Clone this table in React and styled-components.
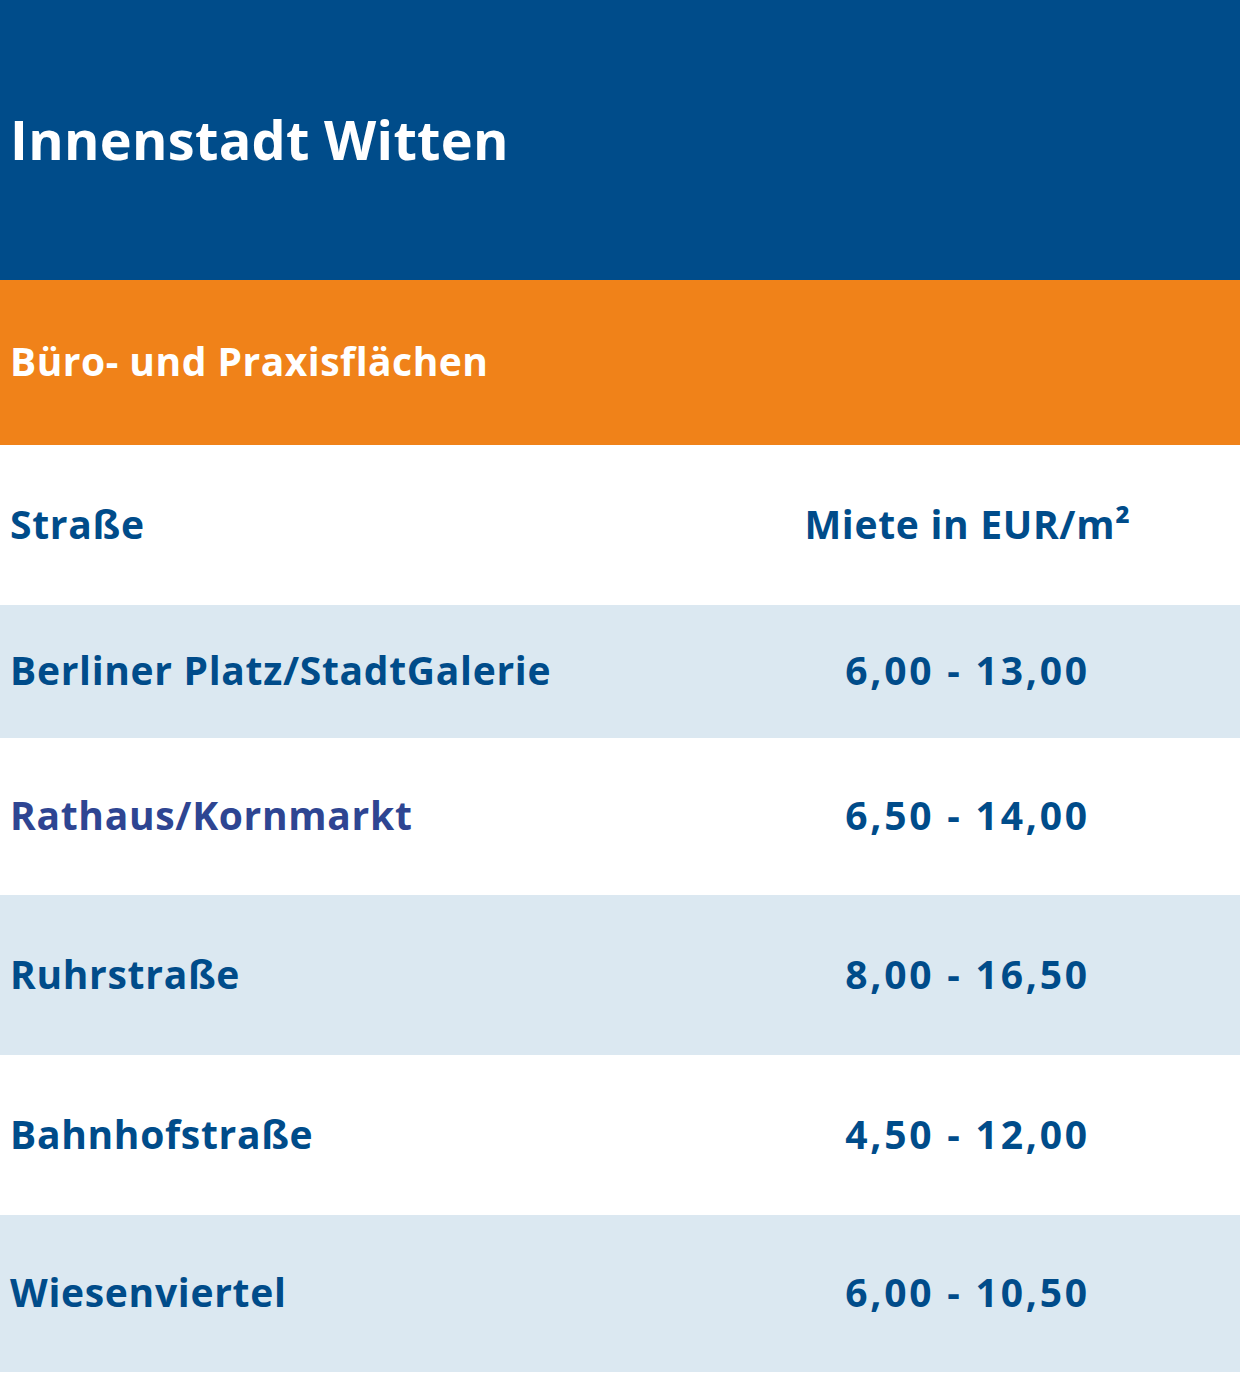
import React from 'react';
import styled, { createGlobalStyle } from 'styled-components';

const GlobalStyle = createGlobalStyle`
  html, body {
    margin: 0;
    padding: 0;
    background: #ffffff;
  }
  body {
    font-family: "Open Sans", "Liberation Sans", sans-serif;
  }
`;

const Page = styled.div`
  width: 1240px;
  padding-bottom: 3px;
`;

const TitleBar = styled.header`
  height: 280px;
  background: #004c8a;
  display: flex;
  align-items: center;
  padding: 0 10px 2px;
  box-sizing: border-box;
`;

const Title = styled.h1`
  margin: 0;
  color: #ffffff;
  font-size: 54px;
  font-weight: 700;
  letter-spacing: 0.3px;
`;

const SubBar = styled.div`
  height: 165px;
  background: #f08219;
  display: flex;
  align-items: center;
  padding: 0 10px 5px;
  box-sizing: border-box;
`;

const SubTitle = styled.h2`
  margin: 0;
  color: #ffffff;
  font-size: 39px;
  font-weight: 700;
  letter-spacing: 0.5px;
`;

const Row = styled.div`
  display: grid;
  grid-template-columns: 695px 1fr;
  align-items: center;
  box-sizing: border-box;
  padding-bottom: 4px;
  height: ${p => p.$h}px;
  background: ${p => (p.$shaded ? '#dbe8f1' : '#ffffff')};
  color: ${p => p.$color || '#004c8a'};
  font-size: 39px;
  font-weight: 700;
  letter-spacing: 0.7px;
`;

const Street = styled.div`
  padding-left: 10px;
`;

const Price = styled.div`
  text-align: center;
  color: #004c8a;
  letter-spacing: ${p => (p.$num ? '2.8px' : '0.7px')};
`;

const rows = [
  { street: 'Berliner Platz/StadtGalerie', price: '6,00 - 13,00', h: 133, shaded: true },
  { street: 'Rathaus/Kornmarkt', price: '6,50 - 14,00', h: 157, color: '#2e4592' },
  { street: 'Ruhrstraße', price: '8,00 - 16,50', h: 160, shaded: true },
  { street: 'Bahnhofstraße', price: '4,50 - 12,00', h: 160 },
  { street: 'Wiesenviertel', price: '6,00 - 10,50', h: 157, shaded: true },
];

export default function App() {
  return (
    <Page>
      <GlobalStyle />
      <TitleBar>
        <Title>Innenstadt Witten</Title>
      </TitleBar>
      <SubBar>
        <SubTitle>Büro- und Praxisflächen</SubTitle>
      </SubBar>
      <Row $h={160}>
        <Street>Straße</Street>
        <Price>Miete in EUR/m²</Price>
      </Row>
      {rows.map(r => (
        <Row key={r.street} $h={r.h} $shaded={r.shaded} $color={r.color}>
          <Street>{r.street}</Street>
          <Price $num>{r.price}</Price>
        </Row>
      ))}
    </Page>
  );
}
